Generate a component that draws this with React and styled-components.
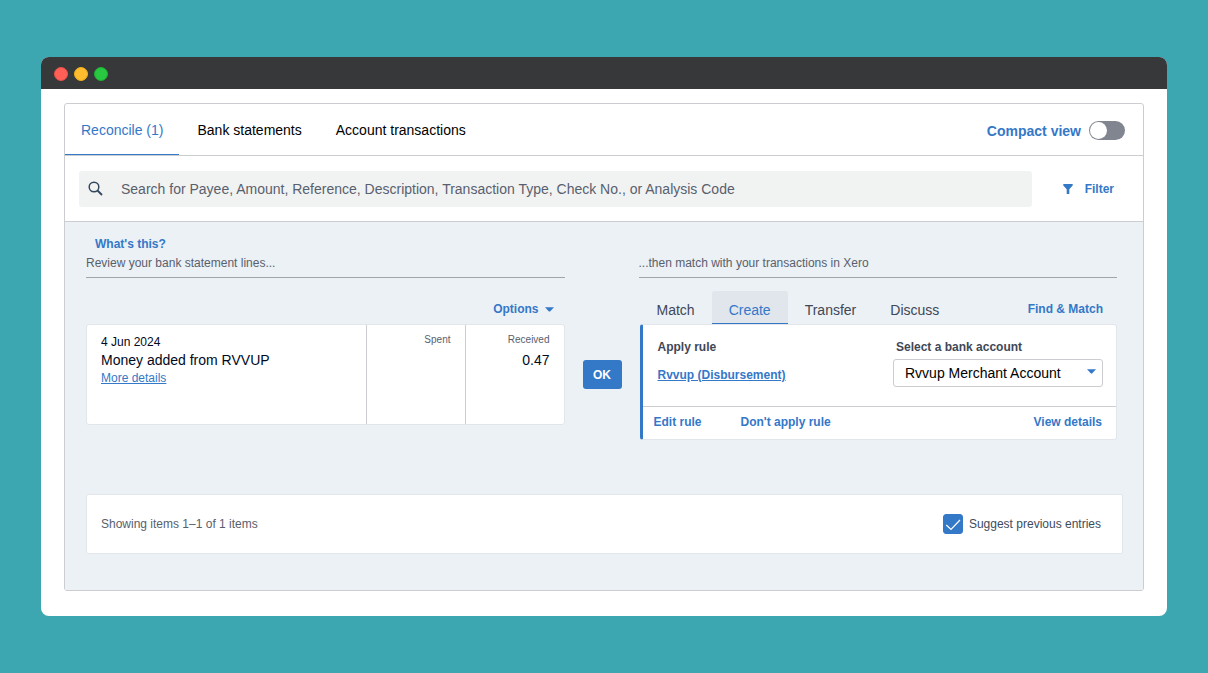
import React, { useState } from "react";
import styled, { createGlobalStyle } from "styled-components";

const BLUE = "#3478c8";
const LINE = "#cbcdd1";

const GlobalStyle = createGlobalStyle`
  * {
    box-sizing: border-box;
  }

  body {
    margin: 0;
    background: #3ca7b0;
    color: #000a1e;
    font-family: "Liberation Sans", Arial, Helvetica, sans-serif;
    font-size: 12px;
    line-height: 18px;
  }

  button,
  input,
  select {
    margin: 0;
    font: inherit;
  }
`;

const Page = styled.main`
  padding: 57px 41px;
`;

const Window = styled.div`
  background: #fff;
  border-radius: 8px;
  overflow: hidden;
`;

const TitleBar = styled.div`
  display: flex;
  align-items: center;
  gap: 6px;
  height: 32px;
  padding: 2px 13px 0;
  background: #37383a;
`;

const Dot = styled.span`
  width: 14px;
  height: 14px;
  border: 1px solid ${(props) => props.$edge};
  border-radius: 50%;
  background: ${(props) => props.$color};
`;

const WindowBody = styled.div`
  padding: 14px 23px 25px;
`;

const Panel = styled.section`
  border: 1px solid ${LINE};
  border-radius: 3px;
  overflow: hidden;
`;

const PanelHeader = styled.header`
  display: flex;
  justify-content: space-between;
  height: 52px;
  padding-right: 18px;
  border-bottom: 1px solid ${LINE};
`;

const PageTabs = styled.nav`
  display: flex;
  gap: 2px;
`;

const PageTab = styled.button`
  padding: 2px 16px 0;
  border: 0;
  border-bottom: 1px solid
    ${(props) => (props.$active ? BLUE : "transparent")};
  background: none;
  color: ${(props) => (props.$active ? BLUE : "#000")};
  font-size: 14px;
  cursor: pointer;
`;

const CompactLabel = styled.label`
  display: flex;
  align-items: center;
  gap: 8px;
  padding-top: 2px;
  color: ${BLUE};
  font-size: 14px;
  font-weight: bold;
`;

const Toggle = styled.input`
  appearance: none;
  display: flex;
  width: 36px;
  height: 19px;
  padding: 1px;
  border-radius: 10px;
  background: ${(props) => (props.checked ? BLUE : "#80858f")};
  cursor: pointer;

  &::before {
    content: "";
    width: 17px;
    height: 17px;
    margin-left: ${(props) => (props.checked ? "auto" : "0")};
    border-radius: 50%;
    background: #fff;
  }
`;

const SearchRow = styled.div`
  display: flex;
  align-items: center;
  padding: 15px 29px 14px 14px;
  border-bottom: 1px solid ${LINE};
`;

const SearchBox = styled.label`
  display: flex;
  align-items: center;
  flex: 1;
  gap: 17px;
  height: 36px;
  margin-right: 31px;
  padding: 0 9px;
  border-radius: 3px;
  background: #f1f3f3;
`;

const SearchInput = styled.input`
  flex: 1;
  min-width: 0;
  padding: 0;
  border: 0;
  outline: 0;
  background: none;
  font-size: 14px;

  &::placeholder {
    color: #59606d;
    opacity: 1;
  }
`;

const TextButton = styled.button`
  display: inline-flex;
  align-items: center;
  gap: ${(props) => props.$gap || 0}px;
  padding: 0;
  border: 0;
  background: none;
  color: ${BLUE};
  font-size: 12px;
  font-weight: bold;
  cursor: pointer;
`;

const Workspace = styled.div`
  padding: 13px 20px 36px 21px;
  background: #ebf1f5;
`;

const Columns = styled.div`
  display: grid;
  grid-template-columns: 1fr 74px 1fr;
  margin-right: 6px;
`;

const ColumnIntro = styled.div`
  display: flex;
  flex-direction: column;
  justify-content: flex-end;
  align-items: flex-start;
  gap: 1px;
  height: 43px;
  border-bottom: 1px solid #a0a5ac;
  color: #59606d;
  padding-bottom: 5px;

  ${TextButton} {
    margin-left: 9px;
  }
`;

const Toolbar = styled.div`
  display: flex;
  justify-content: ${(props) => (props.$end ? "flex-end" : "space-between")};
  align-items: flex-end;
  height: 46px;
  padding: ${(props) => (props.$end ? "0 11px 6px 0" : "0 14px 0 1px")};
`;

const Card = styled.article`
  border: 1px solid #e2e6ea;
  border-radius: 3px;
  background: #fff;
`;

const StatementLine = styled(Card)`
  display: grid;
  grid-template-columns: 1fr 99px 99px;
  height: 101px;
`;

const LineCell = styled.div`
  display: flex;
  flex-direction: column;
  align-items: ${(props) => (props.$amount ? "flex-end" : "flex-start")};
  padding: ${(props) => (props.$amount ? "6px 14px" : "8px 14px")};
  border-left: ${(props) => (props.$amount ? `1px solid ${LINE}` : "0")};
`;

const CellLabel = styled.span`
  margin-bottom: 2px;
  color: #59606d;
  font-size: 10px;
`;

const LineText = styled.span`
  font-size: 14px;
`;

const Link = styled.a`
  color: ${BLUE};
  font-weight: ${(props) => (props.$bold ? "bold" : "normal")};
  text-decoration: underline;
`;

const OkCell = styled.div`
  display: flex;
  justify-content: center;
  align-items: flex-start;
  padding: 125px 0 0 1px;
`;

const OkButton = styled.button`
  width: 39px;
  height: 29px;
  padding: 0;
  border: 0;
  border-radius: 3px;
  background: ${BLUE};
  color: #fff;
  font-size: 12px;
  font-weight: bold;
  cursor: pointer;
`;

const MatchTabs = styled.div`
  display: flex;
`;

const MatchTab = styled.button`
  height: 33px;
  padding: 5px 17px 0;
  border: 0;
  border-bottom: 1px solid
    ${(props) => (props.$active ? BLUE : "transparent")};
  border-radius: 3px 3px 0 0;
  background: ${(props) => (props.$active ? "#e1e5ec" : "none")};
  color: ${(props) => (props.$active ? BLUE : "#404756")};
  font-size: 14px;
  cursor: pointer;
`;

const FindSlot = styled.div`
  display: flex;
  padding-bottom: 6px;
`;

const RuleCard = styled(Card)`
  margin-left: 1px;
  border-left: 3px solid ${BLUE};
`;

const RuleBody = styled.div`
  display: flex;
  justify-content: space-between;
  height: 81px;
  padding: 13px 13px 0 15px;
`;

const RuleInfo = styled.div`
  display: flex;
  flex-direction: column;
  gap: 10px;
`;

const RuleLabel = styled.span`
  color: #404756;
  font-weight: bold;
`;

const AccountField = styled.label`
  display: flex;
  flex-direction: column;
  gap: 3px;
  width: 210px;

  ${RuleLabel} {
    padding-left: 3px;
  }
`;

const SelectWrap = styled.span`
  display: grid;
  align-items: center;

  > * {
    grid-area: 1 / 1;
  }

  svg {
    justify-self: end;
    margin: 0 7px 4px 0;
    pointer-events: none;
  }
`;

const Select = styled.select`
  appearance: none;
  width: 100%;
  height: 28px;
  padding: 0 24px 0 11px;
  border: 1px solid ${LINE};
  border-radius: 3px;
  background: #fff;
  color: #000;
  font-size: 14px;
`;

const RuleFooter = styled.footer`
  display: flex;
  gap: 39px;
  height: 33px;
  padding: 0 14px 2px 11px;
  border-top: 1px solid ${LINE};

  ${TextButton}:last-child {
    margin-left: auto;
  }
`;

const ListFooter = styled(Card).attrs({ as: "footer" })`
  display: flex;
  justify-content: space-between;
  align-items: center;
  height: 60px;
  margin-top: 54px;
  padding: 0 21px 0 14px;
  border-radius: 2px;
  color: #59606d;
`;

const SuggestLabel = styled.label`
  display: flex;
  align-items: center;
  gap: 6px;
  color: #404b5c;
`;

const CheckWrap = styled.span`
  display: grid;

  > * {
    grid-area: 1 / 1;
  }

  svg {
    pointer-events: none;
  }
`;

const Checkbox = styled.input`
  appearance: none;
  width: 20px;
  height: 20px;
  border: 1px solid ${BLUE};
  border-radius: 3px;
  background: ${(props) => (props.checked ? BLUE : "#fff")};
`;

const SearchIcon = () => (
  <svg width="16" height="16" viewBox="0 0 16 16" fill="none" aria-hidden="true">
    <circle cx="6" cy="6" r="4.8" stroke="#33475c" strokeWidth="1.5" />
    <path d="M9.5 9.5L14 14" stroke="#33475c" strokeWidth="1.8" />
  </svg>
);

const FilterIcon = () => (
  <svg width="10" height="10" viewBox="0 0 10 10" fill={BLUE} aria-hidden="true">
    <path d="M0.3 0H9.7V1.5L6.3 5.2V10H3.7V5.2L0.3 1.5Z" />
  </svg>
);

const Caret = () => (
  <svg width="9" height="5" viewBox="0 0 9 5" fill={BLUE} aria-hidden="true">
    <path d="M0 0.3H9L5.3 4.2Q4.5 4.8 3.7 4.2Z" />
  </svg>
);

const PAGE_TABS = ["Reconcile (1)", "Bank statements", "Account transactions"];
const MATCH_TABS = ["Match", "Create", "Transfer", "Discuss"];

const StatementColumn = () => (
  <section>
    <ColumnIntro>
      <TextButton type="button">What's this?</TextButton>
      <span>Review your bank statement lines...</span>
    </ColumnIntro>
    <Toolbar $end>
      <TextButton type="button" $gap={6}>
        Options
        <Caret />
      </TextButton>
    </Toolbar>
    <StatementLine>
      <LineCell>
        <time dateTime="2024-06-04">4 Jun 2024</time>
        <LineText>Money added from RVVUP</LineText>
        <Link href="#details">More details</Link>
      </LineCell>
      <LineCell $amount>
        <CellLabel>Spent</CellLabel>
      </LineCell>
      <LineCell $amount>
        <CellLabel>Received</CellLabel>
        <LineText>0.47</LineText>
      </LineCell>
    </StatementLine>
  </section>
);

const MatchColumn = () => {
  const [selectedTab, setSelectedTab] = useState("Create");

  return (
    <section>
      <ColumnIntro>
        <span>...then match with your transactions in Xero</span>
      </ColumnIntro>
      <Toolbar>
        <MatchTabs role="tablist">
          {MATCH_TABS.map((tab) => (
            <MatchTab
              key={tab}
              type="button"
              role="tab"
              aria-selected={selectedTab === tab}
              $active={selectedTab === tab}
              onClick={() => setSelectedTab(tab)}
            >
              {tab}
            </MatchTab>
          ))}
        </MatchTabs>
        <FindSlot>
          <TextButton type="button">Find &amp; Match</TextButton>
        </FindSlot>
      </Toolbar>
      <RuleCard>
        <RuleBody>
          <RuleInfo>
            <RuleLabel>Apply rule</RuleLabel>
            <Link href="#rule" $bold>
              Rvvup (Disbursement)
            </Link>
          </RuleInfo>
          <AccountField htmlFor="bank-account">
            <RuleLabel>Select a bank account</RuleLabel>
            <SelectWrap>
              <Select id="bank-account">
                <option>Rvvup Merchant Account</option>
              </Select>
              <Caret />
            </SelectWrap>
          </AccountField>
        </RuleBody>
        <RuleFooter>
          <TextButton type="button">Edit rule</TextButton>
          <TextButton type="button">Don't apply rule</TextButton>
          <TextButton type="button">View details</TextButton>
        </RuleFooter>
      </RuleCard>
    </section>
  );
};

const App = () => {
  const [pageTab, setPageTab] = useState(PAGE_TABS[0]);
  const [compact, setCompact] = useState(false);
  const [suggest, setSuggest] = useState(true);

  return (
    <>
      <GlobalStyle />
      <Page>
        <Window>
          <TitleBar>
            <Dot $color="#ff5f57" $edge="#e9524a" />
            <Dot $color="#febc2e" $edge="#f1ae1b" />
            <Dot $color="#28c840" $edge="#1db133" />
          </TitleBar>
          <WindowBody>
            <Panel>
              <PanelHeader>
                <PageTabs>
                  {PAGE_TABS.map((tab) => (
                    <PageTab
                      key={tab}
                      type="button"
                      $active={pageTab === tab}
                      onClick={() => setPageTab(tab)}
                    >
                      {tab}
                    </PageTab>
                  ))}
                </PageTabs>
                <CompactLabel htmlFor="compact-view">
                  Compact view
                  <Toggle
                    id="compact-view"
                    type="checkbox"
                    role="switch"
                    checked={compact}
                    onChange={(e) => setCompact(e.target.checked)}
                  />
                </CompactLabel>
              </PanelHeader>
              <SearchRow>
                <SearchBox htmlFor="search">
                  <SearchIcon />
                  <SearchInput
                    id="search"
                    type="text"
                    aria-label="Search transactions"
                    placeholder="Search for Payee, Amount, Reference, Description, Transaction Type, Check No., or Analysis Code"
                  />
                </SearchBox>
                <TextButton type="button" $gap={12}>
                  <FilterIcon />
                  Filter
                </TextButton>
              </SearchRow>
              <Workspace>
                <Columns>
                  <StatementColumn />
                  <OkCell>
                    <OkButton type="button">OK</OkButton>
                  </OkCell>
                  <MatchColumn />
                </Columns>
                <ListFooter>
                  <span>Showing items 1–1 of 1 items</span>
                  <SuggestLabel htmlFor="suggest">
                    <CheckWrap>
                      <Checkbox
                        id="suggest"
                        type="checkbox"
                        checked={suggest}
                        onChange={(e) => setSuggest(e.target.checked)}
                      />
                      <svg width="20" height="20" viewBox="0 0 20 20" fill="none">
                        <path
                          d="M3.3 11L8 15.5L17 6"
                          stroke="#fff"
                          strokeWidth="1.2"
                        />
                      </svg>
                    </CheckWrap>
                    Suggest previous entries
                  </SuggestLabel>
                </ListFooter>
              </Workspace>
            </Panel>
          </WindowBody>
        </Window>
      </Page>
    </>
  );
};

export default App;
